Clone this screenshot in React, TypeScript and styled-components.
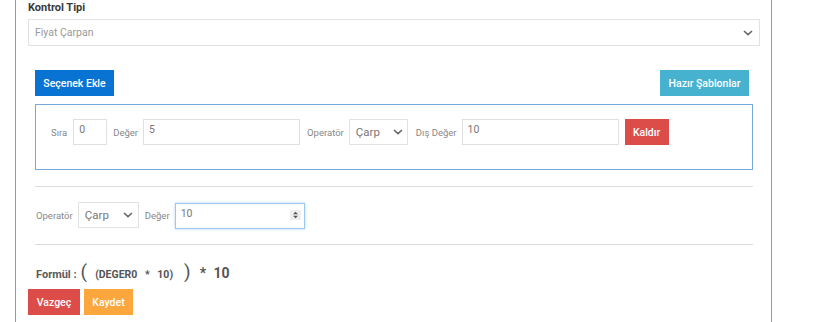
import React from "react";
import styled, { createGlobalStyle } from "styled-components";

const Global = createGlobalStyle`
  html, body { margin: 0; padding: 0; background: #fff; }
  body { font-family: Roboto, "Liberation Sans", Arial, sans-serif; }
  * { box-sizing: border-box; }
`;

const Panel = styled.div`
  margin-left: 15px;
  width: 757px;
  min-height: 100vh;
  border-left: 1px solid #6aa6e0;
  border-right: 1px solid #6aa6e0;
  padding: 0 11px 0 12px;
`;

const FieldLabel = styled.div`
  font-size: 11px;
  line-height: 16px;
  font-weight: 700;
  color: #3a3a3a;
`;

const SelectWrap = styled.div<{ $w?: string; $h?: number }>`
  position: relative;
  width: ${(p) => p.$w ?? "100%"};
  height: ${(p) => p.$h ?? 26}px;
  flex: none;
`;

const NativeSelect = styled.select<{ $fs?: number; $color?: string }>`
  appearance: none;
  -webkit-appearance: none;
  width: 100%;
  height: 100%;
  border: 1px solid #e2e2e2;
  border-radius: 0;
  background: #fff;
  font-family: Roboto, "Liberation Sans", Arial, sans-serif;
  font-size: ${(p) => p.$fs ?? 11}px;
  color: ${(p) => p.$color ?? "#777"};
  padding: 0 20px 0 6px;
  outline: none;
`;

const Chevron = styled.svg<{ $right?: number }>`
  position: absolute;
  right: ${(p) => p.$right ?? 6}px;
  top: 50%;
  transform: translateY(-50%);
  pointer-events: none;
`;

const MainSelect = styled(SelectWrap)`
  margin-top: 3px;
`;

const Options = styled.div`
  padding: 0 7px;
`;

const ButtonBar = styled.div`
  margin-top: 24px;
  display: flex;
  justify-content: space-between;
  padding-right: 4px;
`;

const Btn = styled.button<{ $bg: string; $w: number; $ml?: number }>`
  width: ${(p) => p.$w}px;
  height: 26px;
  margin-left: ${(p) => p.$ml ?? 0}px;
  border: 1px solid ${(p) => p.$bg};
  background: ${(p) => p.$bg};
  color: #fff;
  font-family: Roboto, "Liberation Sans", Arial, sans-serif;
  font-size: 10.5px;
  font-weight: 500;
  padding: 0;
  border-radius: 0;
  flex: none;
`;

const OptionBox = styled.div`
  margin-top: 8px;
  height: 66px;
  border: 1px solid #74a9dd;
  padding: 14px 0 0 14px;
`;

const Row = styled.div`
  display: flex;
  align-items: center;
`;

const SmallLabel = styled.span<{ $ml?: number; $mr?: number }>`
  font-size: 9.5px;
  color: #888;
  margin-left: ${(p) => p.$ml ?? 0}px;
  margin-right: ${(p) => p.$mr ?? 5}px;
  white-space: nowrap;
`;

const TextInput = styled.input<{ $w: number }>`
  width: ${(p) => p.$w}px;
  height: 26px;
  border: 1px solid #e0e0e0;
  border-radius: 0;
  padding: 0 5px 5px;
  font-family: Roboto, "Liberation Sans", Arial, sans-serif;
  font-size: 10.5px;
  color: #777;
  outline: none;
  flex: none;
`;

const Divider = styled.hr<{ $mt: number }>`
  margin: ${(p) => p.$mt}px 0 0;
  border: none;
  border-top: 1px solid #dcdcdc;
  height: 0;
`;

const BottomRow = styled(Row)`
  margin-top: 15px;
  padding-left: 1px;
`;

const NumberWrap = styled.div`
  position: relative;
  width: 130px;
  height: 26px;
  flex: none;
`;

const FocusInput = styled.input`
  width: 100%;
  height: 100%;
  border: 1px solid #9cc7ee;
  box-shadow: 0 0 3px rgba(70, 140, 220, 0.35);
  border-radius: 0;
  padding: 0 20px 5px 5px;
  font-family: Roboto, "Liberation Sans", Arial, sans-serif;
  font-size: 10.5px;
  color: #777;
  outline: none;
`;

const Spinner = styled.svg`
  position: absolute;
  right: 4px;
  top: 8px;
`;

const Formula = styled.div`
  margin-top: 15px;
  padding-left: 1px;
  height: 29px;
  display: flex;
  align-items: baseline;
  color: #555;
  font-weight: 700;
  white-space: pre;
`;

const FormulaLabel = styled.span`
  font-size: 11px;
  color: #5a5a5a;
  margin-right: 4px;
`;

const Paren = styled.span`
  font-size: 19px;
  font-weight: 400;
  color: #555;
`;

const Inner = styled.span`
  font-size: 10.5px;
  color: #555;
  margin: 0 11px 0 8px;
  word-spacing: 5px;
`;

const Tail = styled.span`
  font-size: 14px;
  color: #555;
  margin-left: 9px;
  word-spacing: 4px;
`;

const Actions = styled.div`
  display: flex;
  gap: 4px;
  margin-left: -7px;
`;

const ChevronIcon = ({ right }: { right?: number }) => (
  <Chevron $right={right} width="10" height="6" viewBox="0 0 10 6">
    <path d="M1 1l4 3.6L9 1" fill="none" stroke="#666" strokeWidth="1.6" />
  </Chevron>
);

export default function App() {
  return (
    <>
      <Global />
      <Panel>
        <FieldLabel>Kontrol Tipi</FieldLabel>
        <MainSelect $h={27}>
          <NativeSelect $fs={10.5} $color="#999" defaultValue="fc">
            <option value="fc">Fiyat Çarpan</option>
          </NativeSelect>
          <ChevronIcon right={7} />
        </MainSelect>
        <Options>
          <ButtonBar>
            <Btn $bg="#0873d3" $w={79}>Seçenek Ekle</Btn>
            <Btn $bg="#47b2cf" $w={89}>Hazır Şablonlar</Btn>
          </ButtonBar>
          <OptionBox>
            <Row>
              <SmallLabel $ml={1} $mr={6}>Sıra</SmallLabel>
              <TextInput $w={34} defaultValue="0" />
              <SmallLabel $ml={6}>Değer</SmallLabel>
              <TextInput $w={157} defaultValue="5" />
              <SmallLabel $ml={7}>Operatör</SmallLabel>
              <SelectWrap $w="59px">
                <NativeSelect $fs={11.5} defaultValue="c">
                  <option value="c">Çarp</option>
                </NativeSelect>
                <ChevronIcon right={5} />
              </SelectWrap>
              <SmallLabel $ml={8}>Dış Değer</SmallLabel>
              <TextInput $w={157} defaultValue="10" />
              <Btn $bg="#dc4d49" $w={44} $ml={6}>Kaldır</Btn>
            </Row>
          </OptionBox>
          <Divider $mt={16} />
          <BottomRow>
            <SmallLabel>Operatör</SmallLabel>
            <SelectWrap $w="61px">
              <NativeSelect $fs={11.5} defaultValue="c">
                <option value="c">Çarp</option>
              </NativeSelect>
              <ChevronIcon right={6} />
            </SelectWrap>
            <SmallLabel $ml={6}>Değer</SmallLabel>
            <NumberWrap>
              <FocusInput defaultValue="10" />
              <Spinner width="11" height="10" viewBox="0 0 11 10">
                <rect width="11" height="10" fill="#eeeeee" />
                <path d="M3 4.2L5.5 1.8L8 4.2Z" fill="#555" />
                <path d="M3 5.8L5.5 8.2L8 5.8Z" fill="#555" />
              </Spinner>
            </NumberWrap>
          </BottomRow>
          <Divider $mt={16} />
          <Formula>
            <FormulaLabel>Formül :</FormulaLabel>
            <Paren>(</Paren>
            <Inner>(DEGER0 * 10)</Inner>
            <Paren>)</Paren>
            <Tail>* 10</Tail>
          </Formula>
          <Actions>
            <Btn $bg="#dc4d49" $w={52}>Vazgeç</Btn>
            <Btn $bg="#fba73d" $w={49}>Kaydet</Btn>
          </Actions>
        </Options>
      </Panel>
    </>
  );
}
